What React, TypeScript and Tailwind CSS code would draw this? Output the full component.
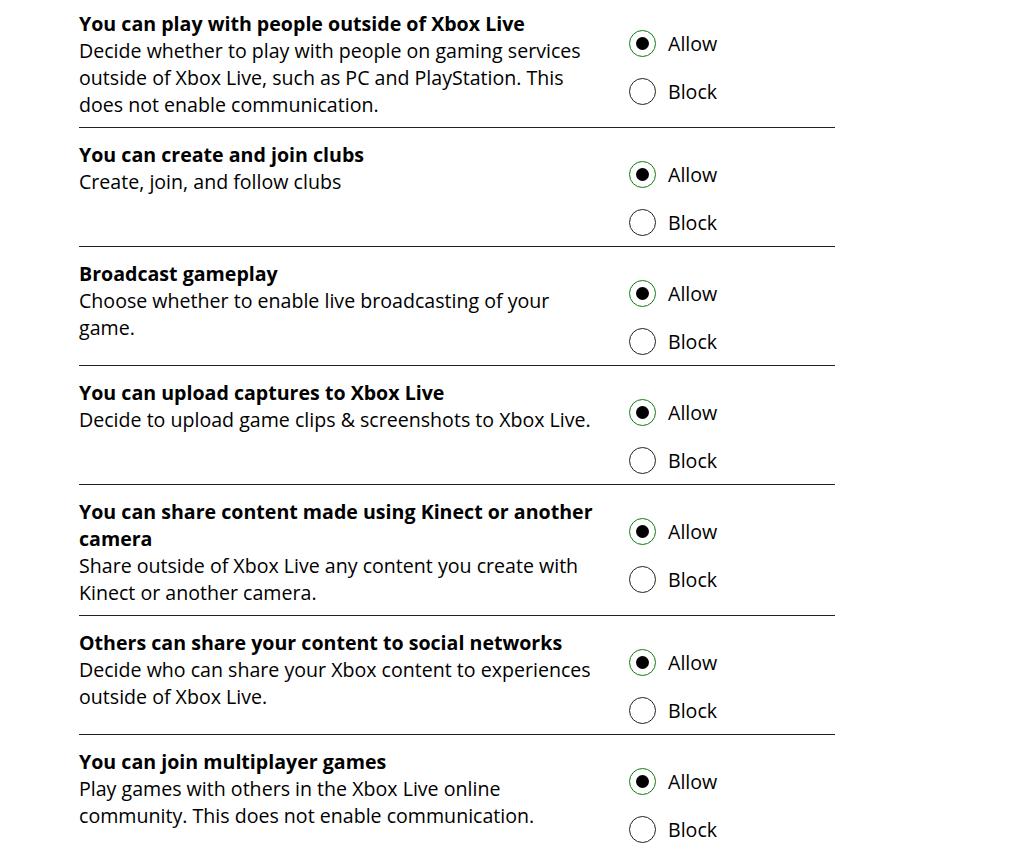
const settings = [
  {
    title: ["You can play with people outside of Xbox Live"],
    desc: [
      "Decide whether to play with people on gaming services",
      "outside of Xbox Live, such as PC and PlayStation. This",
      "does not enable communication.",
    ],
  },
  { title: ["You can create and join clubs"], desc: ["Create, join, and follow clubs"] },
  {
    title: ["Broadcast gameplay"],
    desc: ["Choose whether to enable live broadcasting of your", "game."],
  },
  {
    title: ["You can upload captures to Xbox Live"],
    desc: ["Decide to upload game clips & screenshots to Xbox Live."],
  },
  {
    title: ["You can share content made using Kinect or another", "camera"],
    desc: ["Share outside of Xbox Live any content you create with", "Kinect or another camera."],
  },
  {
    title: ["Others can share your content to social networks"],
    desc: ["Decide who can share your Xbox content to experiences", "outside of Xbox Live."],
  },
  {
    title: ["You can join multiplayer games"],
    desc: ["Play games with others in the Xbox Live online", "community. This does not enable communication."],
  },
];

function Radio({ label, checked }: { label: string; checked?: boolean }) {
  return (
    <div className="flex h-12 items-center gap-3">
      <span
        className={
          checked
            ? "flex h-[27px] w-[27px] items-center justify-center rounded-full border border-[#107c10]"
            : "flex h-[27px] w-[27px] items-center justify-center rounded-full border border-[#222]"
        }
      >
        {checked && <span className="h-[13px] w-[13px] rounded-full bg-black" />}
      </span>
      <span>{label}</span>
    </div>
  );
}

export default function App() {
  return (
    <div
      className="h-[849px] overflow-hidden bg-white text-[19.6px] leading-[27px] text-black"
      style={{ fontFamily: '"Open Sans", "Noto Sans", sans-serif' }}
    >
      <div className="-mt-[3px] ml-[79px] w-[756px]">
        {settings.map((s, i) => (
          <div key={i} className="flex items-start border-b border-[#222]">
            <div className="w-[550px] pt-[13px] pb-[9px]">
              <div className="font-bold">
                {s.title.map((l, j) => (
                  <div key={j} className="whitespace-nowrap">{l}</div>
                ))}
              </div>
              {s.desc.map((l, j) => (
                <div key={j} className="whitespace-nowrap">{l}</div>
              ))}
            </div>
            <div className="pt-[22px]">
              <Radio label="Allow" checked />
              <Radio label="Block" />
            </div>
          </div>
        ))}
      </div>
    </div>
  );
}
